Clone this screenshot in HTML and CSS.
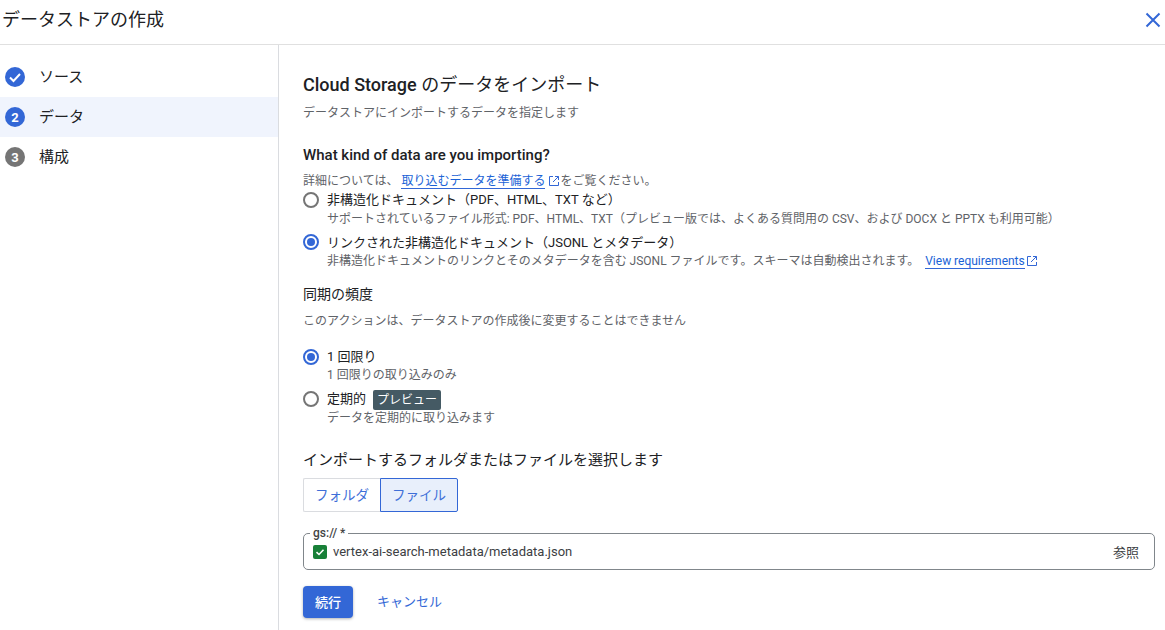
FILE: index.html
```html
<!DOCTYPE html>
<html lang="ja">
<head>
<meta charset="utf-8">
<title>データストアの作成</title>
<link rel="stylesheet" href="styles.css">
</head>
<body>
<header class="topbar">
  <h1 class="title">データストアの作成</h1>
  <svg class="close" viewBox="0 0 16 16" width="16" height="16"><path d="M1.5 1.5 14.5 14.5M14.5 1.5 1.5 14.5" fill="none" stroke="#3367d6" stroke-width="2"/></svg>
</header>
<div class="layout">
  <nav class="sidebar">
    <div class="step">
      <span class="badge blue"><svg viewBox="0 0 20 20" width="20" height="20"><path d="M5 10.5 8.5 14 15 7" fill="none" stroke="#fff" stroke-width="2"/></svg></span>
      <span class="steplabel">ソース</span>
    </div>
    <div class="step active"><span class="badge blue">2</span><span class="steplabel">データ</span></div>
    <div class="step"><span class="badge grey">3</span><span class="steplabel">構成</span></div>
  </nav>
  <main class="content">
    <h2 class="heading"><span class="en">Cloud Storage</span> のデータをインポート</h2>
    <p class="sub first">データストアにインポートするデータを指定します</p>
    <h3 class="question">What kind of data are you importing?</h3>
    <p class="sub detail">詳細については、<a class="link lead" href="#">取り込むデータを準備する</a><svg class="ext wide" viewBox="0 0 12 12" width="12" height="12"><path d="M5 1.5H1.5v9h9V7M7 1.5h3.5V5M10.5 1.5 5 7" fill="none" stroke="#3367d6" stroke-width="1"/></svg>をご覧ください。</p>
    <div class="radio r1">
      <span class="dot"></span>
      <div><div class="rlabel roomy">非構造化ドキュメント（PDF、HTML、TXT など）</div><div class="rhelp">サポートされているファイル形式: PDF、HTML、TXT（プレビュー版では、よくある質問用の CSV、および DOCX と PPTX も利用可能）</div></div>
    </div>
    <div class="radio r2">
      <span class="dot on"></span>
      <div><div class="rlabel mid">リンクされた非構造化ドキュメント（JSONL とメタデータ）</div><div class="rhelp">非構造化ドキュメントのリンクとそのメタデータを含む JSONL ファイルです。スキーマは自動検出されます。 <a class="link small" href="#">View requirements</a><svg class="ext" viewBox="0 0 12 12" width="12" height="12"><path d="M5 1.5H1.5v9h9V7M7 1.5h3.5V5M10.5 1.5 5 7" fill="none" stroke="#3367d6" stroke-width="1"/></svg></div></div>
    </div>
    <h3 class="section">同期の頻度</h3>
    <p class="sub note">このアクションは、データストアの作成後に変更することはできません</p>
    <div class="radio r3">
      <span class="dot on"></span>
      <div><div class="rlabel">1 回限り</div><div class="rhelp">1 回限りの取り込みのみ</div></div>
    </div>
    <div class="radio r4">
      <span class="dot"></span>
      <div><div class="rlabel">定期的<span class="chip">プレビュー</span></div><div class="rhelp tight">データを定期的に取り込みます</div></div>
    </div>
    <h3 class="section pick">インポートするフォルダまたはファイルを選択します</h3>
    <div class="toggle"><span class="tbtn">フォルダ</span><span class="tbtn sel">ファイル</span></div>
    <fieldset class="field">
      <legend class="legend">gs:// *</legend>
      <svg class="ok" viewBox="0 0 14 14" width="14" height="14"><rect width="14" height="14" rx="2" fill="#188038"/><path d="M3.5 7.2 6 9.5 10.5 4.8" fill="none" stroke="#fff" stroke-width="1.6"/></svg>
      <span class="path">vertex-ai-search-metadata/metadata.json</span>
      <span class="browse">参照</span>
    </fieldset>
    <div class="actions"><button class="primary">続行</button><a class="cancel" href="#">キャンセル</a></div>
  </main>
</div>
</body>
</html>
```
FILE: styles.css
```css
* { box-sizing: border-box; }
html, body { margin: 0; height: 630px; overflow: hidden; }
body { font-family: Roboto, "Noto Sans CJK JP", sans-serif; color: #202124; background: #fff; }
.topbar { height: 45px; border-bottom: 1px solid #e0e0e0; display: flex; align-items: center; justify-content: space-between; padding: 0 4px 5px 2px; }
.title { margin: 0; font-size: 18px; font-weight: 400; line-height: 24px; }
.close { display: block; }
.layout { display: flex; height: 585px; }
.sidebar { width: 279px; flex: none; border-right: 1px solid #dadce0; padding-top: 12px; }
.step { height: 40px; display: flex; align-items: center; gap: 14px; padding-left: 5px; font-size: 15px; }
.step.active { background: #f0f4fd; }
.steplabel { margin-bottom: 3px; }
.badge { width: 20px; height: 20px; border-radius: 50%; display: flex; align-items: center; justify-content: center; color: #fff; font-size: 13px; font-weight: 700; }
.badge.blue { background: #3367d6; }
.badge.grey { background: #757575; }
.content { flex: 1; padding: 27px 0 0 24px; min-width: 0; }
.heading { margin: 0; font-size: 18px; line-height: 26px; font-weight: 400; }
.en { font-weight: 500; }
.sub { margin: 0; font-size: 12px; line-height: 18px; color: #5f6368; }
.first { margin-top: 6px; }
.question { margin: 23px 0 0; font-size: 15px; line-height: 20px; font-weight: 500; }
.detail { margin-top: 7px; height: 18px; white-space: nowrap; }
.link { color: #1a62d6; text-decoration: none; border-bottom: 1px solid #3367d6; }
.lead { margin-left: 3px; }
.ext { vertical-align: -2px; margin-left: 1px; }
.ext.wide { margin-left: 3px; }
.radio { display: flex; gap: 8px; align-items: flex-start; white-space: nowrap; }
.dot { width: 16px; height: 16px; border: 2px solid #757575; border-radius: 50%; flex: none; margin-top: 1px; position: relative; }
.dot.on { border-color: #3367d6; }
.dot.on::after { content: ""; position: absolute; inset: 2px; border-radius: 50%; background: #3367d6; }
.rlabel { font-size: 13px; line-height: 18px; }
.rlabel.roomy { line-height: 20px; margin-top: -1px; }
.rlabel.mid { line-height: 19px; }
.rhelp { font-size: 12px; line-height: 18px; color: #5f6368; }
.rhelp.tight { line-height: 16px; }
.small { margin-left: 3px; }
.r1 { margin-top: 1px; }
.r2 { margin-top: 5px; }
.section { margin: 14px 0 0; font-size: 14px; line-height: 20px; font-weight: 400; }
.note { margin-top: 8px; }
.r3 { margin-top: 18px; }
.r4 { margin-top: 6px; }
.chip { display: inline-block; margin-left: 7px; padding: 0 4px; height: 20px; line-height: 20px; border-radius: 2px; background: #455a64; color: #fff; font-size: 12px; vertical-align: -1px; }
.pick { margin-top: 23px; font-size: 15px; line-height: 22px; }
.toggle { display: flex; margin-top: 7px; height: 34px; }
.tbtn { display: flex; align-items: center; justify-content: center; font-size: 13.5px; color: #3f6fd8; border: 1px solid #dadce0; height: 34px; width: 77px; border-radius: 2px 0 0 2px; border-right: 0; padding-bottom: 3px; }
.tbtn.sel { width: 78px; background: #e8effb; border: 1px solid #3367d6; border-radius: 0 2px 2px 0; padding-bottom: 3px; }
.field { margin: 15px 10px 0 0; padding: 0 15px 0 9px; height: 43px; border: 1px solid #80868b; border-radius: 5px; display: flex; align-items: center; gap: 6px; min-width: 0; position: relative; }
.legend { padding: 0 3px; margin-left: -3px; font-size: 12px; line-height: 12px; font-weight: 500; color: #444; height: 12px; }
.ok { flex: none; margin-top: -4px; }
.path { font-size: 13px; color: #3c4043; flex: 1; margin-top: -6px; }
.browse { font-size: 13px; color: #3c4043; margin-top: -6px; }
.actions { display: flex; align-items: center; margin-top: 16px; gap: 24px; }
.primary { width: 50px; height: 32px; border: 0; border-radius: 4px; background: #3367d6; color: #fff; font: 500 13px Roboto, "Noto Sans CJK JP", sans-serif; box-shadow: 0 1px 3px rgba(60,64,67,.4); padding: 0 0 2px; }
.cancel { color: #3367d6; font-size: 13px; text-decoration: none; margin-bottom: 3px; }
```
